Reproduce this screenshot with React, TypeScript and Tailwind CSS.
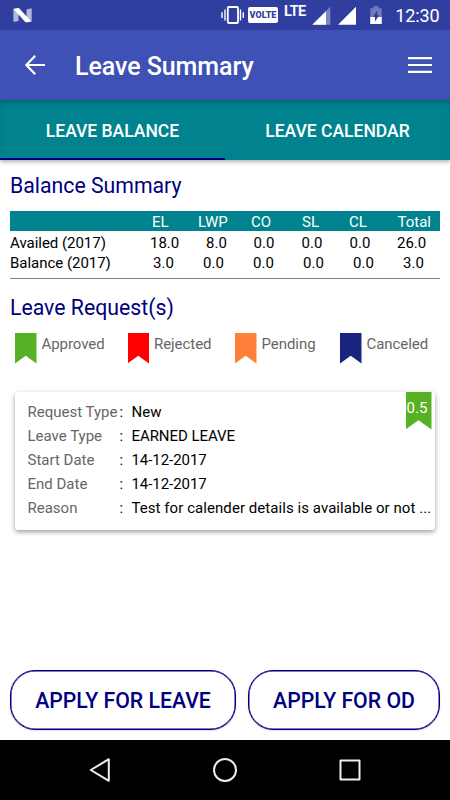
import React from 'react';

function Bookmark({ className, children }: { className: string; children?: React.ReactNode }) {
  return (
    <div className={'shrink-0 [clip-path:polygon(0_0,100%_0,100%_100%,50%_75%,0_100%)] ' + className}>
      {children}
    </div>
  );
}

function StatusBar() {
  return (
    <div className="flex h-[30px] items-start bg-[#303f9f] pl-[13px] pr-[10.5px] text-white">
      <svg className="mt-[8px] h-[15px] w-[19px]" viewBox="0 0 19 15">
        <path d="M0.4 0.6 L5.5 5 V13 L0.4 14Z M13.5 1.6 L18.7 0.2 V13.5 L13.5 10Z" fill="#b3b9dd" />
        <path d="M0.5 0.9 Q3 0 5.8 0 L18.5 13.5 Q16 14.6 12.5 14.2Z" fill="#fff" />
      </svg>
      <svg className="ml-[189px] mt-[6px] h-[18px] w-[23px]" viewBox="0 0 23 18">
        <rect x="6.8" y="1" width="10.2" height="16" rx="1" fill="none" stroke="#fff" strokeWidth="1.8" />
        <path d="M1 6.2V12 M4 3.5V14.5 M19.5 3.5V14.5 M22.3 6.2V12" stroke="#fff" strokeWidth="1.4" />
      </svg>
      <div className="ml-[4px] mt-[7px] flex h-[16px] w-[30px] items-center justify-center rounded-[2px] bg-white text-[9px] font-black leading-none text-[#303f9f]">
        VOLTE
      </div>
      <span className="ml-[6px] mt-[4px] w-[23px] whitespace-nowrap text-[14.5px] font-medium leading-[16px] tracking-[-0.4px] [-webkit-text-stroke:0.2px_white]">LTE</span>
      <svg className="ml-[5px] mt-[6px] h-[19px] w-[20px]" viewBox="0 0 20 19">
        <path d="M18.3 0.8V18.8H0.3Z" fill="#7c86c5" />
        <path d="M14 5.2V18.8H0.3Z" fill="#fff" />
      </svg>
      <svg className="ml-[6px] mt-[6px] h-[19px] w-[19px]" viewBox="0 0 19 19">
        <path d="M18 0.8V18.8H0Z" fill="#fff" />
      </svg>
      <svg className="ml-[13px] mt-[6px] h-[18px] w-[12px]" viewBox="0 0 12 18">
        <path d="M0.3 2.2H3.2V0.2H8.8V2.2H11.7V18H0.3Z" fill="#7079bd" />
        <path d="M0.3 11H11.7V18H0.3Z" fill="#fff" />
        <path d="M7.2 4.5V9H9.3L5 15.5V11H2.8Z" fill="#303f9f" />
      </svg>
      <span className="ml-auto mt-[5px] whitespace-nowrap text-[18px] leading-[22px] tracking-[-0.1px]">12:30</span>
    </div>
  );
}

const legend = [
  { label: 'Approved', color: 'bg-[#57b124]', box: 'w-[112.5px]' },
  { label: 'Rejected', color: 'bg-[#ff0000]', box: 'w-[107.5px]' },
  { label: 'Pending', color: 'bg-[#ff8038]', box: 'w-[105px]' },
  { label: 'Canceled', color: 'bg-[#1a237e]', box: 'w-[90px]' },
];

const details = [
  ['Request Type', 'New', ''],
  ['Leave Type', 'EARNED LEAVE', 'tracking-[-0.06px]'],
  ['Start Date', '14-12-2017', 'tracking-[-0.06px]'],
  ['End Date', '14-12-2017', 'tracking-[-0.06px]'],
  ['Reason', 'Test for calender details is available or not ...', 'tracking-[0.06px]'],
];

export default function App() {
  return (
    <div className="flex h-[800px] w-[450px] flex-col overflow-hidden bg-white font-[Roboto,sans-serif] text-black">
      <StatusBar />
      <header className="flex h-[70px] items-center bg-[#3f51b5] pl-[25px] pr-[18px] text-white">
        <svg className="h-[20px] w-[20px]" viewBox="0 0 20 20" fill="none" stroke="#fff" strokeWidth="2.2">
          <path d="M20 10H1.5 M10.2 0.8L1.3 10L10.2 19.2" />
        </svg>
        <h1 className="ml-[30px] whitespace-nowrap pt-[4px] text-[25px] font-medium leading-[30px] tracking-[-0.06px]">Leave Summary</h1>
        <svg className="ml-auto mt-[-1px] h-[18px] w-[24px]" viewBox="0 0 24 18" fill="#fff">
          <path d="M0 1H24V3.2H0Z M0 7.9H24V10.1H0Z M0 14.8H24V17H0Z" />
        </svg>
      </header>
      <nav className="flex h-[60px] bg-[#00838f] text-[17.5px] font-medium text-white shadow-[inset_0_5px_5px_-2px_rgba(0,0,0,0.22),0_2px_4px_rgba(0,0,0,0.3)]">
        <div className="flex w-[225px] items-center justify-center border-b-2 border-[#000080] pt-[4px]">LEAVE BALANCE</div>
        <div className="flex w-[225px] items-center justify-center pt-[2px]">LEAVE CALENDAR</div>
      </nav>

      <main className="flex h-[580px] flex-col">
        <h2 className="ml-[10px] mt-[12px] whitespace-nowrap text-[21.25px] leading-[28px] text-[#000080]">Balance Summary</h2>
        <div className="mx-[10px] mt-[11px] h-[68px] border-b border-[#808080] text-[15px] leading-[20px]">
          <div className="flex h-[20px] whitespace-nowrap bg-[#00838f] pl-[142px] pt-px text-white">
            <span className="w-[46px] shrink-0">EL</span>
            <span className="w-[53px] shrink-0">LWP</span>
            <span className="w-[51px] shrink-0">CO</span>
            <span className="w-[47px] shrink-0">SL</span>
            <span className="w-[48.5px] shrink-0">CL</span>
            <span>Total</span>
          </div>
          <div className="flex h-[21px] whitespace-nowrap pt-[2px]">
            <span className="w-[140px] shrink-0 tracking-[-0.03px]">Availed (2017)</span>
            <span className="w-[56px] shrink-0">18.0</span>
            <span className="w-[47.5px] shrink-0">8.0</span>
            <span className="w-[48px] shrink-0">0.0</span>
            <span className="w-[48px] shrink-0">0.0</span>
            <span className="w-[47.5px] shrink-0">0.0</span>
            <span>26.0</span>
          </div>
          <div className="flex h-[21px] whitespace-nowrap pt-px">
            <span className="w-[143px] shrink-0 tracking-[-0.03px]">Balance (2017)</span>
            {['3.0', '0.0', '0.0', '0.0', '0.0'].map((v, i) => (
              <span key={i} className="w-[50px] shrink-0">{v}</span>
            ))}
            <span>3.0</span>
          </div>
        </div>

        <h2 className="ml-[10px] mt-[15px] whitespace-nowrap text-[21.25px] leading-[28px] text-[#000080]">Leave Request(s)</h2>
        <div className="ml-[15px] mt-[10.5px] flex h-[31px] text-[15px] leading-[20px] text-[#666666]">
          {legend.map((l) => (
            <div key={l.label} className={'flex shrink-0 whitespace-nowrap ' + l.box}>
              <Bookmark className={'h-[31px] w-[21.5px] ' + l.color} />
              <span className="ml-[5px] mt-px tracking-[-0.06px]">{l.label}</span>
            </div>
          ))}
        </div>

        <div className="ml-[15px] mt-[28.5px] flex h-[137.5px] w-[420px] justify-between rounded-[3px] bg-white shadow-[0_2px_5px_rgba(0,0,0,0.38)]">
          <div className="flex flex-col pl-[12.5px] pt-[7.5px] text-[15px] leading-[24.2px]">
            {details.map(([k, v, tracking]) => (
              <div key={k} className="flex whitespace-nowrap">
                <span className="w-[92px] text-[#666666]">{k}</span>
                <span className="w-[12px]">:</span>
                <span className={'w-[264px] ' + tracking}>{v}</span>
              </div>
            ))}
          </div>
          <Bookmark className="mr-[3.5px] h-[37.5px] w-[26px] bg-[#57b124]">
            <div className="whitespace-nowrap pl-[1px] pt-[5.5px] text-[15px] leading-[20px] text-white">0.5</div>
          </Bookmark>
        </div>

        <div className="mb-[10px] mt-auto flex gap-[12px] pl-[10px] text-[21.25px] font-medium text-[#000080]">
          <button className="h-[60px] w-[226px] whitespace-nowrap rounded-[25px] border border-[#000080] bg-white pt-[2px] shadow-[0_1px_2px_rgba(0,0,0,0.12),inset_0_0_0_0.5px_#000080]">APPLY FOR LEAVE</button>
          <button className="h-[60px] w-[192px] whitespace-nowrap rounded-[25px] border border-[#000080] bg-white pt-[2px] shadow-[0_1px_2px_rgba(0,0,0,0.12),inset_0_0_0_0.5px_#000080]">APPLY FOR OD</button>
        </div>
      </main>

      <footer className="flex h-[60px] items-center bg-black pl-[88px]">
        <svg className="h-[26px] w-[274px]" viewBox="0 0 274 26" fill="none" stroke="#eee" strokeWidth="2" strokeLinejoin="round">
          <path d="M20.8 2.2V23.8L2.8 13Z" />
          <circle cx="137" cy="13" r="11" />
          <rect x="252.5" y="3.5" width="19" height="19" />
        </svg>
      </footer>
    </div>
  );
}
